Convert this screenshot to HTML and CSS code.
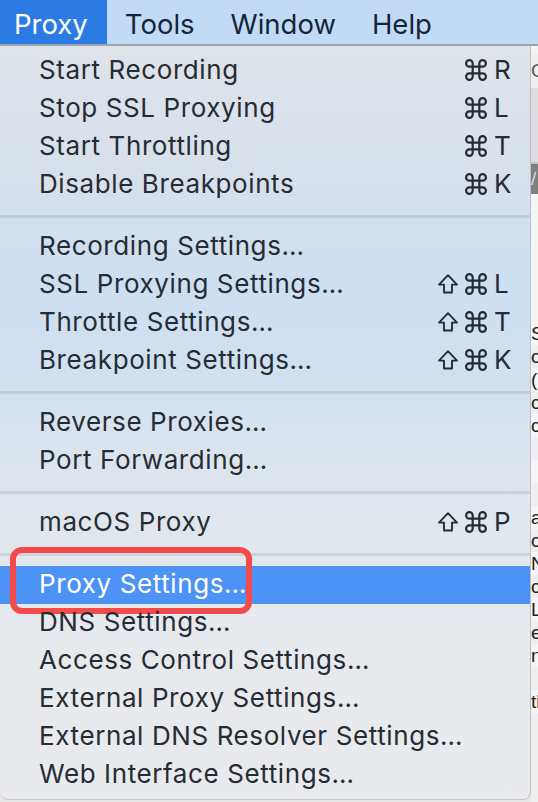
FILE: index.html
```html
<!DOCTYPE html>
<html>
<head>
<meta charset="utf-8">
<link rel="stylesheet" href="styles.css">
</head>
<body>
<div class="menubar">
  <div class="mb-item first active">Proxy</div>
  <div class="mb-item">Tools</div>
  <div class="mb-item">Window</div>
  <div class="mb-item">Help</div>
</div>
<div class="below">
  <div class="menu">
    <div class="item"><span class="label">Start Recording</span><span class="kbd"><span class="mods"><svg class="cmd" viewBox="2 2 20 20"><path d="M15 6v12a3 3 0 1 0 3-3H6a3 3 0 1 0 3 3V6a3 3 0 1 0-3 3h12a3 3 0 1 0-3-3"/></svg></span><span class="key">R</span></span></div>
    <div class="item"><span class="label">Stop SSL Proxying</span><span class="kbd"><span class="mods"><svg class="cmd" viewBox="2 2 20 20"><path d="M15 6v12a3 3 0 1 0 3-3H6a3 3 0 1 0 3 3V6a3 3 0 1 0-3 3h12a3 3 0 1 0-3-3"/></svg></span><span class="key">L</span></span></div>
    <div class="item"><span class="label">Start Throttling</span><span class="kbd"><span class="mods"><svg class="cmd" viewBox="2 2 20 20"><path d="M15 6v12a3 3 0 1 0 3-3H6a3 3 0 1 0 3 3V6a3 3 0 1 0-3 3h12a3 3 0 1 0-3-3"/></svg></span><span class="key">T</span></span></div>
    <div class="item"><span class="label">Disable Breakpoints</span><span class="kbd"><span class="mods"><svg class="cmd" viewBox="2 2 20 20"><path d="M15 6v12a3 3 0 1 0 3-3H6a3 3 0 1 0 3 3V6a3 3 0 1 0-3 3h12a3 3 0 1 0-3-3"/></svg></span><span class="key">K</span></span></div>
    <div class="sep"></div>
    <div class="item"><span class="label">Recording Settings…</span></div>
    <div class="item"><span class="label">SSL Proxying Settings…</span><span class="kbd"><span class="mods"><svg class="shift" viewBox="1 1 22 22"><path d="M12 3.2 L21 12.6 H16 V20.5 H8 V12.6 H3 Z"/></svg><svg class="cmd" viewBox="2 2 20 20"><path d="M15 6v12a3 3 0 1 0 3-3H6a3 3 0 1 0 3 3V6a3 3 0 1 0-3 3h12a3 3 0 1 0-3-3"/></svg></span><span class="key">L</span></span></div>
    <div class="item"><span class="label">Throttle Settings…</span><span class="kbd"><span class="mods"><svg class="shift" viewBox="1 1 22 22"><path d="M12 3.2 L21 12.6 H16 V20.5 H8 V12.6 H3 Z"/></svg><svg class="cmd" viewBox="2 2 20 20"><path d="M15 6v12a3 3 0 1 0 3-3H6a3 3 0 1 0 3 3V6a3 3 0 1 0-3 3h12a3 3 0 1 0-3-3"/></svg></span><span class="key">T</span></span></div>
    <div class="item"><span class="label">Breakpoint Settings…</span><span class="kbd"><span class="mods"><svg class="shift" viewBox="1 1 22 22"><path d="M12 3.2 L21 12.6 H16 V20.5 H8 V12.6 H3 Z"/></svg><svg class="cmd" viewBox="2 2 20 20"><path d="M15 6v12a3 3 0 1 0 3-3H6a3 3 0 1 0 3 3V6a3 3 0 1 0-3 3h12a3 3 0 1 0-3-3"/></svg></span><span class="key">K</span></span></div>
    <div class="sep"></div>
    <div class="item"><span class="label">Reverse Proxies…</span></div>
    <div class="item"><span class="label">Port Forwarding…</span></div>
    <div class="sep"></div>
    <div class="item"><span class="label">macOS Proxy</span><span class="kbd"><span class="mods"><svg class="shift" viewBox="1 1 22 22"><path d="M12 3.2 L21 12.6 H16 V20.5 H8 V12.6 H3 Z"/></svg><svg class="cmd" viewBox="2 2 20 20"><path d="M15 6v12a3 3 0 1 0 3-3H6a3 3 0 1 0 3 3V6a3 3 0 1 0-3 3h12a3 3 0 1 0-3-3"/></svg></span><span class="key">P</span></span></div>
    <div class="sep"></div>
    <div class="item selected"><span class="label">Proxy Settings…</span><span class="callout"></span></div>
    <div class="item"><span class="label">DNS Settings…</span></div>
    <div class="item"><span class="label">Access Control Settings…</span></div>
    <div class="item"><span class="label">External Proxy Settings…</span></div>
    <div class="item"><span class="label">External DNS Resolver Settings…</span></div>
    <div class="item"><span class="label">Web Interface Settings…</span></div>
  </div>
  <div class="strip">
    <div class="s-top"></div>
    <div class="s-row">C</div>
    <div class="s-gap"></div>
    <div class="s-band">/</div>
    <div class="s-gap2"></div>
    <div class="s-rows">
      <div class="s-line">S</div>
      <div class="s-line">c</div>
      <div class="s-line">(</div>
      <div class="s-line">c</div>
      <div class="s-line">c</div>
      <div class="s-line"></div>
      <div class="s-line"></div>
      <div class="s-line"></div>
      <div class="s-line">a</div>
      <div class="s-line">c</div>
      <div class="s-line">N</div>
      <div class="s-line">c</div>
      <div class="s-line">L</div>
      <div class="s-line">e</div>
      <div class="s-line">n</div>
      <div class="s-line"></div>
      <div class="s-line">ti</div>
    </div>
  </div>
</div>
</body>
</html>
```
FILE: styles.css
```css
html, body {
  margin: 0;
  padding: 0;
}
body {
  width: 538px;
  height: 802px;
  overflow: hidden;
  background: #e8e8e8;
  font-family: Inter, "Open Sans", "Liberation Sans", sans-serif;
}
.menubar {
  display: flex;
  height: 44px;
  background: #c1dbf6;
  border-bottom: 2px solid #9ea7b1;
}
.mb-item {
  padding: 4px 18px 0;
  line-height: 40px;
  font-size: 27.5px;
  color: #15253a;
}
.mb-item.first {
  padding: 4px 19px 0 14px;
}
.mb-item.active {
  background: #2c7be4;
  color: #ffffff;
}
.below {
  display: flex;
  height: 756px;
}
.menu {
  width: 531px;
  height: 754px;
  box-sizing: border-box;
  padding: 6px 0;
  border-right: 1px solid #bcc0c6;
  border-bottom: 1px solid #c6c8cc;
  border-radius: 0 0 8px 8px;
  background: linear-gradient(180deg, #dfe3ea 0%, #d7e0eb 18%, #cddff2 32%, #d2e1f0 45%, #dee5ed 58%, #e6e9ed 75%, #e9eaed 100%);
  flex-shrink: 0;
}
.item {
  position: relative;
  display: flex;
  align-items: center;
  height: 38px;
  box-sizing: border-box;
  padding: 0 18px 2px 39px;
  font-size: 26px;
  line-height: 36px;
  color: #262c34;
}
.label {
  flex: 1;
  white-space: nowrap;
  letter-spacing: 0.6px;
}
.item.selected {
  background: #4d93f6;
  color: #ffffff;
}
.sep {
  height: 24px;
  display: flex;
  align-items: center;
}
.sep::before {
  content: "";
  display: block;
  width: 100%;
  height: 3px;
  background: rgba(100, 115, 135, 0.17);
}
.kbd {
  display: flex;
  align-items: center;
}
.mods {
  display: flex;
  align-items: center;
  gap: 6px;
}
.mods svg {
  width: 22px;
  height: 22px;
  fill: none;
  stroke: currentColor;
  stroke-width: 2;
  stroke-linejoin: round;
  stroke-linecap: round;
}
.mods svg.shift {
  stroke-width: 1.9;
}
.key {
  width: 18px;
  margin-left: 7px;
}
.callout {
  position: absolute;
  left: 10px;
  top: -19px;
  width: 242px;
  height: 67px;
  box-sizing: border-box;
  border: 6px solid #f44b4a;
  border-radius: 12px;
}
.strip {
  flex: 1;
  overflow: hidden;
  display: flex;
  flex-direction: column;
  background: #efefef;
  font-family: "Liberation Sans", sans-serif;
  font-size: 19px;
  color: #1e1e1e;
  white-space: nowrap;
}
.s-top {
  height: 8px;
  background: #f4f4f4;
}
.s-row {
  height: 34px;
  line-height: 34px;
  color: #555;
}
.s-gap {
  height: 74px;
  background: #dedede;
  border-bottom: 2px solid #c4c4c4;
}
.s-band {
  height: 30px;
  line-height: 30px;
  background: #7f7f7f;
  color: #d8d8d8;
}
.s-gap2 {
  height: 128px;
  background: #f4f4f4;
}
.s-line {
  height: 23px;
  line-height: 23px;
}
.s-line:nth-child(odd) {
  background: #f6f6f6;
}
```
